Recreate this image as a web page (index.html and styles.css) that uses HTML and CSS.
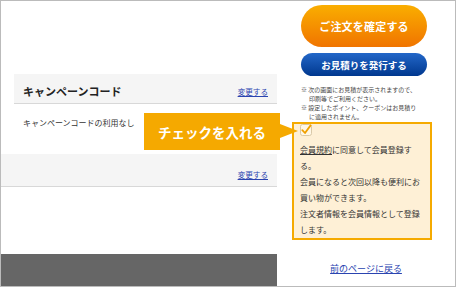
FILE: index.html
```html
<!DOCTYPE html>
<html lang="ja">
<head>
  <meta charset="UTF-8">
  <meta name="viewport" content="width=device-width, initial-scale=1">
  <title>ご注文内容の確認</title>
  <link rel="stylesheet" href="styles.css">
</head>
<body>

<div class="page">
  <div class="main">
    <div class="campaign">
      <div class="section-head">
        <h3>キャンペーンコード</h3>
        <a href="#" class="change">変更する</a>
      </div>
      <div class="section-body">キャンペーンコードの利用なし</div>
    </div>

    <div class="section-head wide">
      <a href="#" class="change">変更する</a>
    </div>

    <div class="footer-bar"></div>
  </div>

  <div class="side">
    <button class="btn btn-order">ご注文を確定する</button>
    <button class="btn btn-quote">お見積りを発行する</button>

    <ul class="notes">
      <li>※ 次の画面にお見積が表示されますので、印刷等でご利用ください。</li>
      <li>※ 設定したポイント、クーポンはお見積りに適用されません。</li>
    </ul>

    <div class="member-box">
      <span class="check">
        <svg width="12" height="12" viewBox="0 0 12 12">
          <rect x="0.5" y="0.5" width="11" height="11" rx="2" fill="#fff7e6" stroke="#d9c9a8"/>
          <path d="M2.3 6.2 L5 9 L10.6 1.4" fill="none" stroke="#f0a000" stroke-width="1.8" stroke-linecap="round" stroke-linejoin="round"/>
        </svg>
      </span>
      <p><a href="#" class="terms">会員規約</a>に同意して会員登録する。</p>
      <p>会員になると次回以降も便利にお買い物ができます。</p>
      <p>注文者情報を会員情報として登録します。</p>
    </div>

    <a href="#" class="back">前のページに戻る</a>
  </div>

  <div class="callout">チェックを入れる</div>
</div>

</body>
</html>
```

FILE: styles.css
```css
body {
  margin: 0;
  font-family: "Noto Sans CJK JP", "Noto Sans", sans-serif;
  color: #333;
}
.page {
  position: relative;
  width: 456px;
  height: 287px;
  box-sizing: border-box;
  border: 1px solid #bbb;
  display: flex;
  overflow: hidden;
  background: white;
}
.main {
  width: 276px;
  display: flex;
  flex-direction: column;
}
.campaign {
  margin: 73px 0 0 13px;
}
.section-head {
  display: flex;
  justify-content: space-between;
  align-items: flex-end;
  height: 30px;
  box-sizing: border-box;
  padding: 0 9px 5px;
  background: #f5f5f5;
  border-bottom: 1px solid #d8d8d8;
}
.section-head h3 {
  margin: 0;
  font-size: 11px;
  line-height: 14px;
  font-weight: bold;
  color: #222;
}
.change {
  font-size: 7.6px;
  line-height: 12px;
  color: #2a44b0;
}
.section-body {
  font-size: 8px;
  line-height: 12px;
  padding: 13px 9px 25px;
}
.section-head.wide {
  height: 33px;
  justify-content: flex-end;
  padding-bottom: 5px;
}
.footer-bar {
  margin-top: 67px;
  flex: 1;
  background: #666;
}
.side {
  flex: 1;
  display: flex;
  flex-direction: column;
  padding-top: 4px;
}
.btn {
  margin-left: 24px;
  width: 126px;
  border: none;
  color: white;
  font-family: inherit;
  font-weight: bold;
  padding: 0;
  cursor: pointer;
}
.btn-order {
  height: 42px;
  border-radius: 21px;
  font-size: 11px;
  letter-spacing: 0.2px;
  background: linear-gradient(#faae00, #f07400);
}
.btn-quote {
  margin-top: 6px;
  height: 23px;
  border-radius: 12px;
  font-size: 9.5px;
  background: linear-gradient(#2367c8, #00388f);
}
.notes {
  list-style: none;
  margin: 10px 0 0 24px;
  padding: 0;
  width: 120px;
  font-size: 6px;
  line-height: 8.5px;
  color: #444;
}
.notes li {
  padding-left: 8px;
  text-indent: -8px;
  margin-bottom: 1px;
}
.member-box {
  margin: 0 0 0 15px;
  width: 140px;
  box-sizing: border-box;
  border: 2px solid #f5aa00;
  background: #fef0d6;
  padding: 0 6px;
}
.check {
  display: block;
  height: 11px;
  margin-bottom: 7px;
}
.check svg {
  display: block;
  margin-top: -0.5px;
}
.member-box p {
  margin: 0;
  font-size: 8px;
  line-height: 16px;
}
.terms {
  color: #333;
}
.back {
  margin-top: 23px;
  align-self: center;
  font-size: 9px;
  line-height: 12px;
  color: #2a44b0;
}
.callout {
  position: absolute;
  left: 143px;
  top: 112px;
  width: 136px;
  height: 37px;
  background: #f5a900;
  color: white;
  font-size: 13.5px;
  font-weight: bold;
  display: flex;
  align-items: center;
  justify-content: center;
}
.callout::after {
  content: "";
  position: absolute;
  right: -18px;
  top: 11px;
  border-left: 18px solid #f5a900;
  border-top: 7px solid transparent;
  border-bottom: 7px solid transparent;
}
```
